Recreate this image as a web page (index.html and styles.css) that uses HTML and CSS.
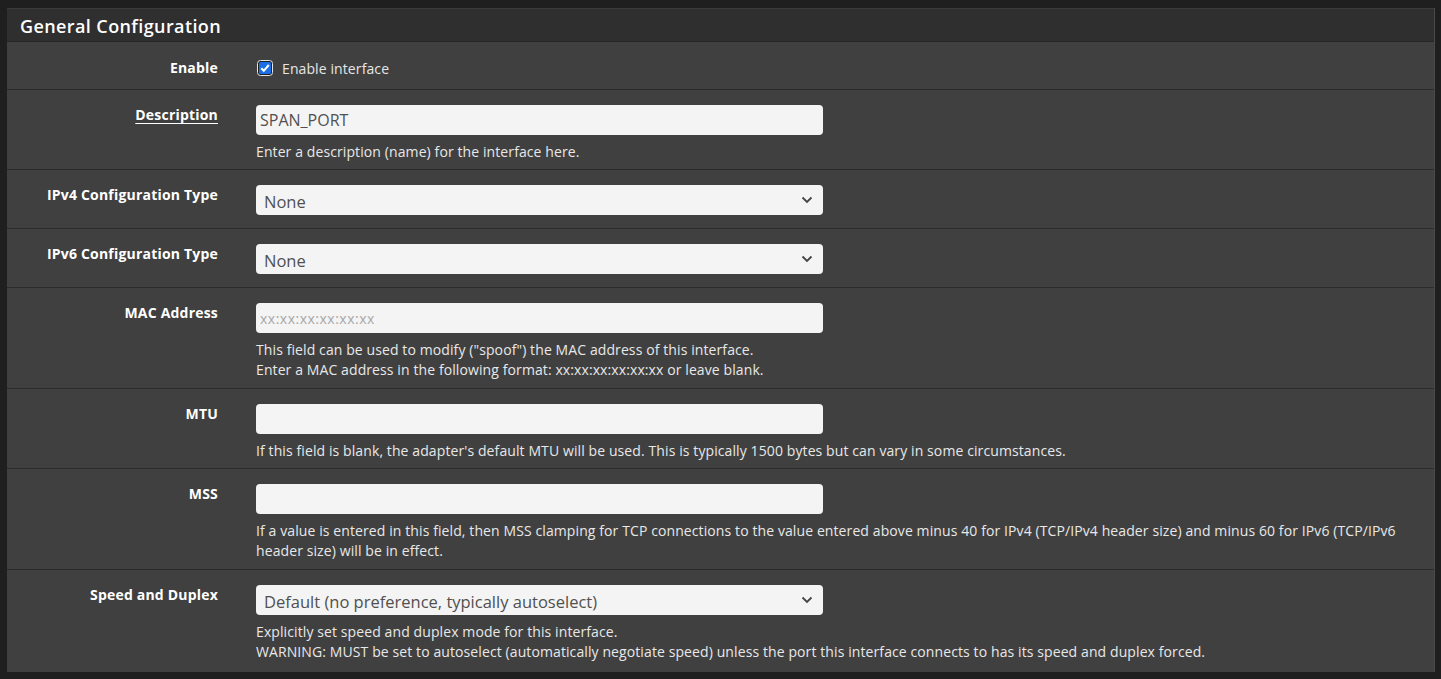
FILE: index.html
```html
<!DOCTYPE html>
<html lang="en">
<head>
<meta charset="utf-8">
<title>General Configuration</title>
<link rel="stylesheet" href="styles.css">
</head>
<body>
<div class="panel">
  <div class="panel-heading">General Configuration</div>
  <div class="panel-body">
    <div class="row row-check">
      <div class="label">Enable</div>
      <div class="field">
        <label class="check">
          <svg class="checkbox" width="16" height="16" viewBox="0 0 16 16">
            <rect x="0.5" y="0.5" width="15" height="15" rx="3" fill="#1f1f1f" stroke="#e6e6e6"/>
            <rect x="2" y="2" width="12" height="12" rx="1.5" fill="#1b6ee6"/>
            <path d="M4.3 8.2 L6.8 10.8 L11.8 5" fill="none" stroke="#ffffff" stroke-width="2"/>
          </svg>
          <span>Enable interface</span>
        </label>
      </div>
    </div>
    <div class="row">
      <div class="label"><span class="underline">Description</span></div>
      <div class="field">
        <div class="input">SPAN_PORT</div>
        <div class="help">Enter a description (name) for the interface here.</div>
      </div>
    </div>
    <div class="row row-nohelp">
      <div class="label">IPv4 Configuration Type</div>
      <div class="field">
        <div class="input select"><span>None</span>
          <svg class="chev" width="12" height="8" viewBox="0 0 12 8"><path d="M1.5 1.5 L6 6 L10.5 1.5" fill="none" stroke="#444" stroke-width="1.8"/></svg>
        </div>
      </div>
    </div>
    <div class="row row-nohelp">
      <div class="label">IPv6 Configuration Type</div>
      <div class="field">
        <div class="input select"><span>None</span>
          <svg class="chev" width="12" height="8" viewBox="0 0 12 8"><path d="M1.5 1.5 L6 6 L10.5 1.5" fill="none" stroke="#444" stroke-width="1.8"/></svg>
        </div>
      </div>
    </div>
    <div class="row row-two">
      <div class="label">MAC Address</div>
      <div class="field">
        <div class="input placeholder">xx:xx:xx:xx:xx:xx</div>
        <div class="help">This field can be used to modify ("spoof") the MAC address of this interface.<br>Enter a MAC address in the following format: xx:xx:xx:xx:xx:xx or leave blank.</div>
      </div>
    </div>
    <div class="row">
      <div class="label">MTU</div>
      <div class="field">
        <div class="input"></div>
        <div class="help">If this field is blank, the adapter's default MTU will be used. This is typically 1500 bytes but can vary in some circumstances.</div>
      </div>
    </div>
    <div class="row row-two">
      <div class="label">MSS</div>
      <div class="field">
        <div class="input"></div>
        <div class="help">If a value is entered in this field, then MSS clamping for TCP connections to the value entered above minus 40 for IPv4 (TCP/IPv4 header size) and minus 60 for IPv6 (TCP/IPv6 header size) will be in effect.</div>
      </div>
    </div>
    <div class="row row-last">
      <div class="label">Speed and Duplex</div>
      <div class="field">
        <div class="input select"><span>Default (no preference, typically autoselect)</span>
          <svg class="chev" width="12" height="8" viewBox="0 0 12 8"><path d="M1.5 1.5 L6 6 L10.5 1.5" fill="none" stroke="#444" stroke-width="1.8"/></svg>
        </div>
        <div class="help">Explicitly set speed and duplex mode for this interface.<br>WARNING: MUST be set to autoselect (automatically negotiate speed) unless the port this interface connects to has its speed and duplex forced.</div>
      </div>
    </div>
  </div>
</div>
</body>
</html>
```

FILE: styles.css
```css
html, body {
  margin: 0;
  padding: 0;
  background: #1f1f1f;
}
body {
  padding: 8px 6px 8px 7px;
  font-family: "Open Sans", "Noto Sans", sans-serif;
  color: #e6e6e6;
}
.panel {
  width: 1428px;
  background: #404040;
  border-right: 1px solid #4a4a4a;
  box-sizing: border-box;
}
.panel-heading {
  height: 34px;
  box-sizing: border-box;
  background: #2f2f2f;
  border-top: 1px solid #3a3a3a;
  border-bottom: 1px solid #262626;
  padding: 5px 0 0 13px;
  font-size: 18px;
  font-weight: 600;
  letter-spacing: 0.4px;
  color: #ffffff;
  line-height: 24px;
}
.panel-body {
  display: flex;
  flex-direction: column;
}
.row {
  display: flex;
  padding: 15px 0 7px;
  border-bottom: 1px solid #2b2b2b;
}
.row-two {
  padding-bottom: 8px;
}
.row-nohelp {
  padding-bottom: 13px;
}
.row-check {
  padding-top: 16px;
  padding-bottom: 11px;
}
.row-last {
  border-bottom: none;
  padding-bottom: 10px;
}
.label {
  width: 211px;
  flex: none;
  text-align: right;
  font-weight: 700;
  font-size: 14px;
  letter-spacing: 0.2px;
  line-height: 20px;
  color: #ffffff;
}
.underline {
  text-decoration: underline;
  text-underline-offset: 3px;
}
.field {
  flex: 1;
  margin-left: 38px;
  padding-right: 15px;
}
.check {
  display: flex;
  align-items: center;
  gap: 9px;
  height: 20px;
  font-size: 14px;
  letter-spacing: 0.1px;
  color: #e6e6e6;
}
.checkbox {
  display: block;
  margin-left: 1px;
}
.input {
  width: 567px;
  height: 30px;
  box-sizing: border-box;
  background: #f4f4f4;
  border-radius: 4px;
  padding: 0 4px;
  font-size: 16px;
  line-height: 31px;
  color: #505050;
}
.placeholder {
  font-size: 14px;
  color: #a8a8a8;
  letter-spacing: 0.5px;
}
.select {
  display: flex;
  align-items: center;
  justify-content: space-between;
  padding: 0 10px 0 8px;
  font-size: 16.5px;
}
.select span {
  line-height: 30px;
  padding-top: 3px;
}
.chev {
  display: block;
}
.help {
  margin-top: 7px;
  font-size: 14px;
  letter-spacing: 0.1px;
  line-height: 20px;
  color: #e8e8e8;
}
```
